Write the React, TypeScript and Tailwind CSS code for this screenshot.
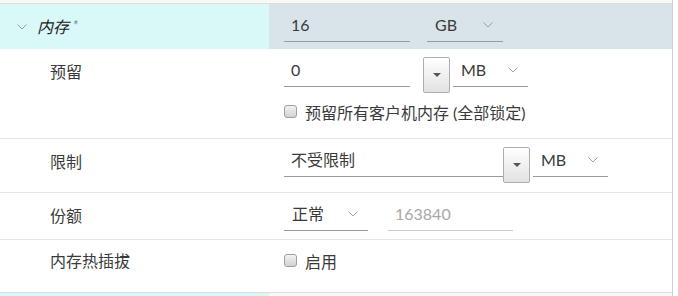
import React from 'react'

const font = "font-['Lato','Noto_Sans_CJK_SC',sans-serif]"

function Chevron({ className = '' }: { className?: string }) {
  return (
    <svg width="10" height="6" viewBox="0 0 10 6" className={className}>
      <polyline points="0.5,0.5 5,5 9.5,0.5" fill="none" stroke="currentColor" strokeWidth="1" />
    </svg>
  )
}

function TextField({ value, width, muted }: { value: string; width: string; muted?: boolean }) {
  return (
    <div
      className={`${width} flex h-[30px] items-center border-b pb-1 pl-[7px] ${
        muted ? 'border-[#cccccc] text-[#a8a8a8]' : 'border-[#9a9a9a] text-[#3a3a3a]'
      }`}
    >
      {value}
    </div>
  )
}

function Select({ value, width }: { value: string; width: string }) {
  return (
    <div className={`${width} flex h-[30px] items-center justify-between border-b border-[#9a9a9a] pb-1 pl-[8px] pr-[10px] text-[#3a3a3a]`}>
      <span>{value}</span>
      <Chevron className="text-[#a0a0a0]" />
    </div>
  )
}

function CaretButton() {
  return (
    <div className="flex h-[36px] w-[27px] shrink-0 items-center justify-center rounded-[2px] border border-[#adadad] bg-linear-to-b from-white to-[#e2e2e2]">
      <svg width="8" height="4" viewBox="0 0 8 4">
        <polygon points="0,0 8,0 4,4" fill="#555" />
      </svg>
    </div>
  )
}

function Checkbox({ label }: { label: string }) {
  return (
    <div className="flex h-[20px] items-center gap-[8px] text-[#3a3a3a]">
      <span className="-mt-[3px] h-[13px] w-[13px] rounded-[3px] border border-[#9f9f9f] bg-linear-to-b from-[#f2f2f2] to-[#d2d2d2]" />
      <span>{label}</span>
    </div>
  )
}

export default function App() {
  return (
    <div className={`${font} h-[296px] w-[678px] overflow-hidden bg-white text-[16px] leading-none`}>
      <div className="w-[673px] border-r border-[#cfcfcf]">
        <div className="h-[3px] bg-[#f8f8f8]" />
        <div className="border-t border-[#dddddd]" />

        {/* section header */}
        <div className="flex h-[45px]">
          <div className="flex w-[269px] items-center gap-[10px] bg-[#d9f8f8] pl-[17px]">
            <Chevron className="text-[#9a9a9a]" />
            <span className="italic text-[#222]">
              内存 <span className="relative -top-[3px] text-[13px] text-[#6a8598]">*</span>
            </span>
          </div>
          <div className="flex flex-1 items-start gap-[17px] bg-[#d9e4ea] pl-[15px] pt-[8px]">
            <TextField value="16" width="w-[126px]" />
            <Select value="GB" width="w-[76px]" />
          </div>
        </div>

        {/* 预留 */}
        <div className="flex h-[90px] border-b border-[#e6e6e6]">
          <div className="w-[269px] pl-[50px] pt-[8px] leading-[30px] text-[#3a3a3a]">预留</div>
          <div className="flex-1 pl-[15px] pt-[8px]">
            <div className="flex items-start">
              <TextField value="0" width="w-[126px]" />
              <div className="ml-[13px]">
                <CaretButton />
              </div>
              <div className="ml-[3px]">
                <Select value="MB" width="w-[75px]" />
              </div>
            </div>
            <div className="mt-[10px]">
              <Checkbox label="预留所有客户机内存 (全部锁定)" />
            </div>
          </div>
        </div>

        {/* 限制 */}
        <div className="flex h-[54px] border-b border-[#e6e6e6]">
          <div className="w-[269px] pl-[50px] pt-[8px] leading-[30px] text-[#3a3a3a]">限制</div>
          <div className="flex flex-1 items-start pl-[15px] pt-[8px]">
            <TextField value="不受限制" width="w-[219px]" />
            <CaretButton />
            <div className="ml-[3px]">
              <Select value="MB" width="w-[75px]" />
            </div>
          </div>
        </div>

        {/* 份额 */}
        <div className="flex h-[47px] border-b border-[#e6e6e6]">
          <div className="w-[269px] pl-[50px] pt-[8px] leading-[30px] text-[#3a3a3a]">份额</div>
          <div className="flex flex-1 items-start gap-[20px] pl-[15px] pt-[8px]">
            <Select value="正常" width="w-[84px]" />
            <TextField value="163840" width="w-[125px]" muted />
          </div>
        </div>

        {/* 内存热插拔 */}
        <div className="flex h-[53px] border-b border-[#dddddd]">
          <div className="w-[269px] pl-[50px] pt-[6px] leading-[30px] text-[#3a3a3a]">内存热插拔</div>
          <div className="flex-1 pl-[15px] pt-[12px]">
            <Checkbox label="启用" />
          </div>
        </div>

        <div className="flex h-[10px]">
          <div className="w-[269px] bg-[#d9f8f8]" />
          <div className="flex-1 bg-[#f7f7f7]" />
        </div>
      </div>
    </div>
  )
}
